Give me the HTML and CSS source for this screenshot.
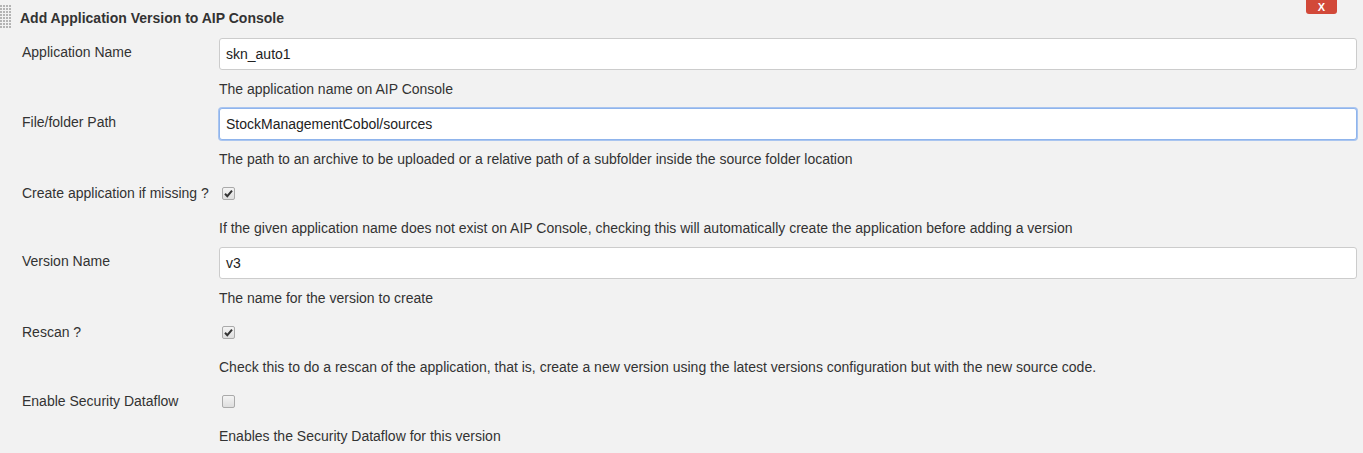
FILE: index.html
```html
<!DOCTYPE html>
<html>
<head>
<meta charset="utf-8">
<link rel="stylesheet" href="styles.css">
</head>
<body>
<div class="panel">
  <div class="header">
    <span class="grip"></span>
    <span class="title">Add Application Version to AIP Console</span>
    <button class="close">X</button>
  </div>
  <div class="form">
    <div class="label">Application Name</div>
    <div class="field"><div class="input">skn_auto1</div></div>
    <div class="desc">The application name on AIP Console</div>

    <div class="label">File/folder Path</div>
    <div class="field"><div class="input focus">StockManagementCobol/sources</div></div>
    <div class="desc">The path to an archive to be uploaded or a relative path of a subfolder inside the source folder location</div>

    <div class="label check-row">Create application if missing ?</div>
    <div class="field check-row"><span class="cb"><svg viewBox="0 0 13 13" width="13" height="13"><path d="M3 6.8 L5.3 9.2 L10 3.6" fill="none" stroke="#333" stroke-width="2"/></svg></span></div>
    <div class="desc">If the given application name does not exist on AIP Console, checking this will automatically create the application before adding a version</div>

    <div class="label">Version Name</div>
    <div class="field"><div class="input">v3</div></div>
    <div class="desc">The name for the version to create</div>

    <div class="label check-row">Rescan ?</div>
    <div class="field check-row"><span class="cb"><svg viewBox="0 0 13 13" width="13" height="13"><path d="M3 6.8 L5.3 9.2 L10 3.6" fill="none" stroke="#333" stroke-width="2"/></svg></span></div>
    <div class="desc">Check this to do a rescan of the application, that is, create a new version using the latest versions configuration but with the new source code.</div>

    <div class="label check-row">Enable Security Dataflow</div>
    <div class="field check-row"><span class="cb"></span></div>
    <div class="desc">Enables the Security Dataflow for this version</div>
  </div>
</div>
</body>
</html>
```
FILE: styles.css
```css
html, body {
  margin: 0;
  padding: 0;
  background: #f2f2f2;
}
body {
  font-family: "Liberation Sans", Arial, sans-serif;
  font-size: 14px;
  color: #333;
  overflow: hidden;
}
.panel {
  width: 1363px;
}
.header {
  height: 38px;
  display: flex;
  align-items: flex-start;
  position: relative;
}
.grip {
  width: 11px;
  height: 24px;
  margin-top: 5px;
  background-image: radial-gradient(circle at 1px 1px, #b4b4b4 1px, transparent 1.2px);
  background-size: 3px 3px;
}
.title {
  margin-left: 9px;
  margin-top: 10px;
  font-weight: bold;
  line-height: 16px;
}
.close {
  position: absolute;
  right: 26px;
  top: 0;
  width: 31px;
  height: 14px;
  border: 0;
  padding: 0;
  background: #d24939;
  color: #fff;
  font-family: "Liberation Sans", Arial, sans-serif;
  font-weight: bold;
  font-size: 11px;
  line-height: 12px;
  border-radius: 0 0 3px 3px;
}
.form {
  display: grid;
  grid-template-columns: 219px 1138px;
}
.label {
  padding-left: 22px;
  height: 32px;
  line-height: 16px;
  padding-top: 6px;
  box-sizing: border-box;
}
.field {
  height: 32px;
  display: flex;
  align-items: center;
}
.check-row {
  height: 31px;
}
.label.check-row {
  padding-top: 7px;
}
.desc {
  grid-column: 2;
  height: 38px;
  line-height: 16px;
  padding-top: 11px;
  box-sizing: border-box;
}
.input {
  width: 100%;
  height: 32px;
  box-sizing: border-box;
  background: #fff;
  border: 1px solid #ccc;
  border-radius: 3px;
  padding: 0 6px;
  font-size: 14px;
  line-height: 30px;
  color: #222;
}
.input.focus {
  border-color: #8fb4ec;
  box-shadow: 0 0 0 1px #a9c5f0;
}
.cb {
  width: 13px;
  height: 13px;
  margin-left: 3px;
  box-sizing: border-box;
  border: 1px solid #aaa;
  border-radius: 2px;
  background: linear-gradient(#f4f4f4, #dedede);
  display: flex;
  align-items: center;
  justify-content: center;
}
.cb svg {
  display: block;
  flex: none;
}
```
